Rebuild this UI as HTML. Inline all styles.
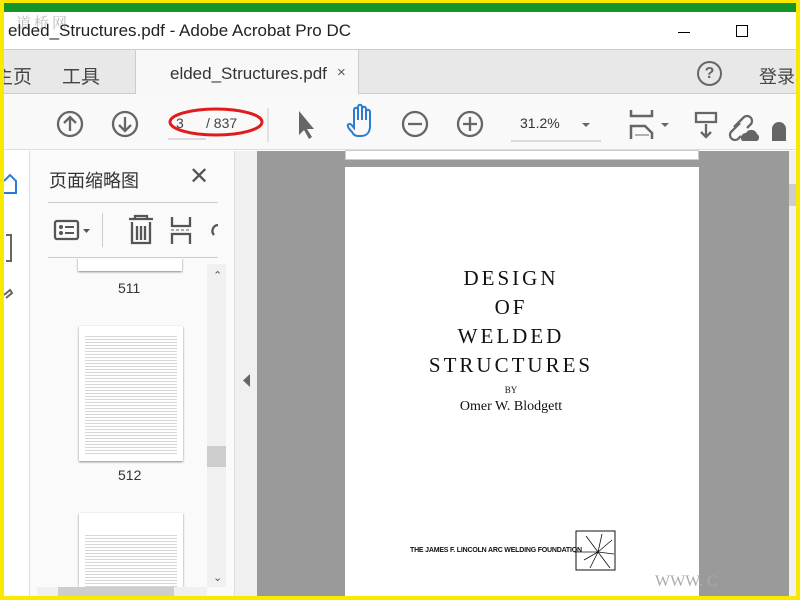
<!DOCTYPE html><html><head><meta charset="utf-8"><style>
*{margin:0;padding:0;box-sizing:border-box}
body{width:800px;height:600px;overflow:hidden;background:#fbe800;position:relative;font-family:"Liberation Sans","Noto Sans CJK SC",sans-serif}
.a{position:absolute}
.ser{font-family:"Liberation Serif",serif;color:#111}
</style></head><body>
<div class="a" style="left:4px;top:3px;width:792px;height:593px;background:#fff;overflow:hidden">
<div class="a" style="left:0;top:0;width:792px;height:9px;background:#14952a"></div>
<div class="a" style="left:12px;top:9px;font-size:15px;color:#bbb;letter-spacing:3px;font-family:'Noto Serif CJK SC',serif">道桥网</div>
<div class="a" style="left:4px;top:18px;font-size:17px;color:#222">elded_Structures.pdf - Adobe Acrobat Pro DC</div>
<div class="a" style="left:674px;top:29px;width:12px;height:1px;background:#000"></div>
<div class="a" style="left:732px;top:22px;width:12px;height:12px;border:1px solid #000"></div>
<div class="a" style="left:0;top:46px;width:792px;height:45px;background:#e8e8e8;border-top:1px solid #ccc;border-bottom:1px solid #ccc"></div>
<div class="a" style="left:131px;top:46px;width:224px;height:46px;background:#f8f8f8;border:1px solid #ccc;border-bottom:none"></div>
<div class="a" style="left:-10px;top:59px;font-size:19px;color:#444">主页</div>
<div class="a" style="left:58px;top:59px;font-size:19px;color:#444">工具</div>
<div class="a" style="left:166px;top:61px;font-size:17px;color:#333">elded_Structures.pdf</div>
<div class="a" style="left:333px;top:61px;font-size:15px;color:#555">×</div>
<div class="a" style="left:693px;top:58px;width:25px;height:25px;border:2px solid #666;border-radius:50%;text-align:center;font-size:16px;font-weight:bold;color:#666;line-height:21px">?</div>
<div class="a" style="left:755px;top:60px;font-size:18px;color:#444;white-space:nowrap">登录</div>
<div class="a" style="left:0;top:91px;width:792px;height:56px;background:#f9f9f9;border-bottom:1px solid #ddd"></div>
<svg class="a" style="left:0;top:91px" width="792" height="56">
<g fill="none" stroke="#666" stroke-width="2.3">
<circle cx="66" cy="30" r="12"/><path d="M66 37V23M60 29l6-6 6 6"/>
<circle cx="121" cy="30" r="12"/><path d="M121 23v14M115 31l6 6 6-6"/>
<circle cx="411" cy="30" r="12"/><path d="M404 30h14"/>
<circle cx="466" cy="30" r="12"/><path d="M459 30h14M466 23v14"/>
</g>
<path d="M164 45h38" stroke="#bbb"/><path d="M507 47h90" stroke="#bbb"/>
<path d="M264 14v34" stroke="#ccc"/>
<ellipse cx="212" cy="28" rx="46" ry="13" fill="none" stroke="#e01b1b" stroke-width="3"/>
<path d="M295 17l0 24 5-5 5 9 3-2-5-8 7 0z" fill="#666"/>
<path d="M348 38c-3-3-6-7-3-8 2-1 4 3 5 4V16c0-3 4-3 4 0v10V13c0-3 4-3 4 0v13V15c0-3 4-3 4 0v11V18c0-3 4-3 4 0v14c0 6-3 10-9 10h-3c-3 0-5-2-6-4z" fill="none" stroke="#2b7bd3" stroke-width="2"/>
<path d="M578 29h8l-4 4z" fill="#666"/>
<g fill="none" stroke="#666" stroke-width="2.5"><path d="M627 16v6h21v-6M627 45V32h14l7 7v6"/></g>
<path d="M631 41h14" stroke="#666"/>
<path d="M657 29h8l-4 4z" fill="#666"/>
<g fill="none" stroke="#666" stroke-width="2.3"><path d="M692 19h20v9h-20zM702 30v13M697 38l5 5 5-5"/>
<path d="M730 33l10-10a5 5 0 0 1 7 7l-4 4M736 29l-9 9a5 5 0 0 0 7 7l3-3"/></g>
<path d="M738 47a5 5 0 0 1 4-8a6 6 0 0 1 11 1a4 4 0 0 1 0 7z" fill="#666"/>
<path d="M768 35a7 7 0 1 1 14 0v12h-14z" fill="#666"/>
</svg>
<div class="a" style="left:172px;top:112px;font-size:14px;color:#444">3</div>
<div class="a" style="left:202px;top:112px;font-size:14px;color:#444">/ 837</div>
<div class="a" style="left:516px;top:112px;font-size:14px;color:#333">31.2%</div>
<div class="a" style="left:0;top:148px;width:26px;height:445px;background:#fff;border-right:1px solid #ddd"></div>
<svg class="a" style="left:0;top:170px" width="26" height="140"><path d="M0 8l6-6 6 6v12H0" fill="none" stroke="#2b7bd3" stroke-width="2"/><path d="M2 62h5v26H2" fill="none" stroke="#666" stroke-width="2"/><path d="M0 122l6-5 2 3-6 5" fill="none" stroke="#666" stroke-width="2"/></svg>
<div class="a" style="left:26px;top:148px;width:204px;height:445px;background:#fafafa"></div>
<div class="a" style="left:45px;top:164px;font-size:18px;color:#333">页面缩略图</div>
<div class="a" style="left:185px;top:159px;font-size:24px;color:#555">✕</div>
<div class="a" style="left:44px;top:199px;width:170px;height:1px;background:#ccc"></div>
<div class="a" style="left:44px;top:254px;width:170px;height:1px;background:#ccc"></div>
<div class="a" style="left:98px;top:210px;width:1px;height:34px;background:#ccc"></div>
<svg class="a" style="left:44px;top:210px" width="180" height="36"><g fill="none" stroke="#555" stroke-width="2.3"><rect x="7" y="8" width="23" height="18" rx="2"/><path d="M81 6h24M87 6v-3h12v3M84 9v21h18V9M89 13v14M93 13v14M97 13v14M124 4v9h18v-9M124 31v-10h18v10"/></g><circle cx="13" cy="14" r="2" fill="#555"/><circle cx="13" cy="20" r="2" fill="#555"/><path d="M17 14h9M17 20h9" stroke="#555" stroke-width="2"/><path d="M35 16h7l-3.5 4z" fill="#555"/><path d="M123 17h20" stroke="#555" stroke-dasharray="3 2"/><path d="M170 12a6 6 0 0 0-4 10" fill="none" stroke="#555" stroke-width="2.3"/></svg>
<div class="a" style="left:26px;top:256px;width:177px;height:328px;overflow:hidden">
<div class="a" style="left:48px;top:-11px;width:104px;height:23px;background:#fff;box-shadow:0 1px 2px #888"></div>
<div class="a" style="left:88px;top:21px;font-size:14px;color:#333">511</div>
<div class="a" style="left:49px;top:67px;width:104px;height:135px;background:#fff;box-shadow:0 1px 2px #888;overflow:hidden">
<div style="margin:8px 6px;height:120px;background:repeating-linear-gradient(#fff 0 2px,#ccc 2px 3px);opacity:.8"></div></div>
<div class="a" style="left:88px;top:208px;font-size:14px;color:#333">512</div>
<div class="a" style="left:49px;top:254px;width:104px;height:83px;background:#fff;box-shadow:0 1px 2px #888;overflow:hidden">
<div style="margin:20px 6px;height:70px;background:repeating-linear-gradient(#fff 0 2px,#ccc 2px 3px);opacity:.8"></div></div>
</div>
<div class="a" style="left:203px;top:261px;width:19px;height:323px;background:#f0f0f0"></div>
<div class="a" style="left:203px;top:443px;width:19px;height:21px;background:#cdcdcd"></div>
<div class="a" style="left:209px;top:266px;font-size:11px;color:#555">⌃</div>
<div class="a" style="left:209px;top:568px;font-size:11px;color:#555">⌄</div>
<div class="a" style="left:33px;top:584px;width:170px;height:9px;background:#f0f0f0"></div>
<div class="a" style="left:54px;top:584px;width:116px;height:9px;background:#cdcdcd"></div>
<div class="a" style="left:230px;top:148px;width:23px;height:445px;background:#f0f0f0;border-left:1px solid #ddd"></div>
<svg class="a" style="left:238px;top:371px" width="10" height="14"><path d="M8 0v13L1 6.5z" fill="#666"/></svg>
<div class="a" style="left:253px;top:148px;width:532px;height:445px;background:#9a9a9a"></div>
<div class="a" style="left:341px;top:147px;width:354px;height:10px;background:#fff;border:1px solid #ccc"></div>
<div class="a" style="left:341px;top:164px;width:354px;height:429px;background:#fff"></div>
<div class="a ser" style="left:341px;top:261px;width:332px;text-align:center;font-size:21px;letter-spacing:3px;line-height:29px">DESIGN<br>OF<br>WELDED<br>STRUCTURES</div>
<div class="a ser" style="left:341px;top:382px;width:332px;text-align:center;font-size:9px">BY</div>
<div class="a ser" style="left:341px;top:396px;width:332px;text-align:center;font-size:14px">Omer W. Blodgett</div>
<div class="a" style="left:406px;top:544px;font-size:7px;font-weight:bold;color:#111;letter-spacing:-.2px">THE JAMES F. LINCOLN ARC WELDING FOUNDATION</div>
<svg class="a" style="left:570px;top:527px" width="46" height="50"><rect x="2" y="1" width="39" height="39" fill="none" stroke="#111"/><g stroke="#111" stroke-width=".8"><path d="M24 22L12 6M24 22L38 10M24 22L36 38M24 22L16 38M24 22L40 24M24 22L10 30M24 22L28 4M0 22h24"/></g></svg>
<div class="a" style="left:651px;top:570px;font-size:16px;color:#aaa;font-family:'Liberation Serif',serif">WWW. C</div>
<div class="a" style="left:785px;top:148px;width:7px;height:445px;background:#f0f0f0"></div>
<div class="a" style="left:785px;top:181px;width:7px;height:22px;background:#cdcdcd"></div>
</div>
</body></html>
